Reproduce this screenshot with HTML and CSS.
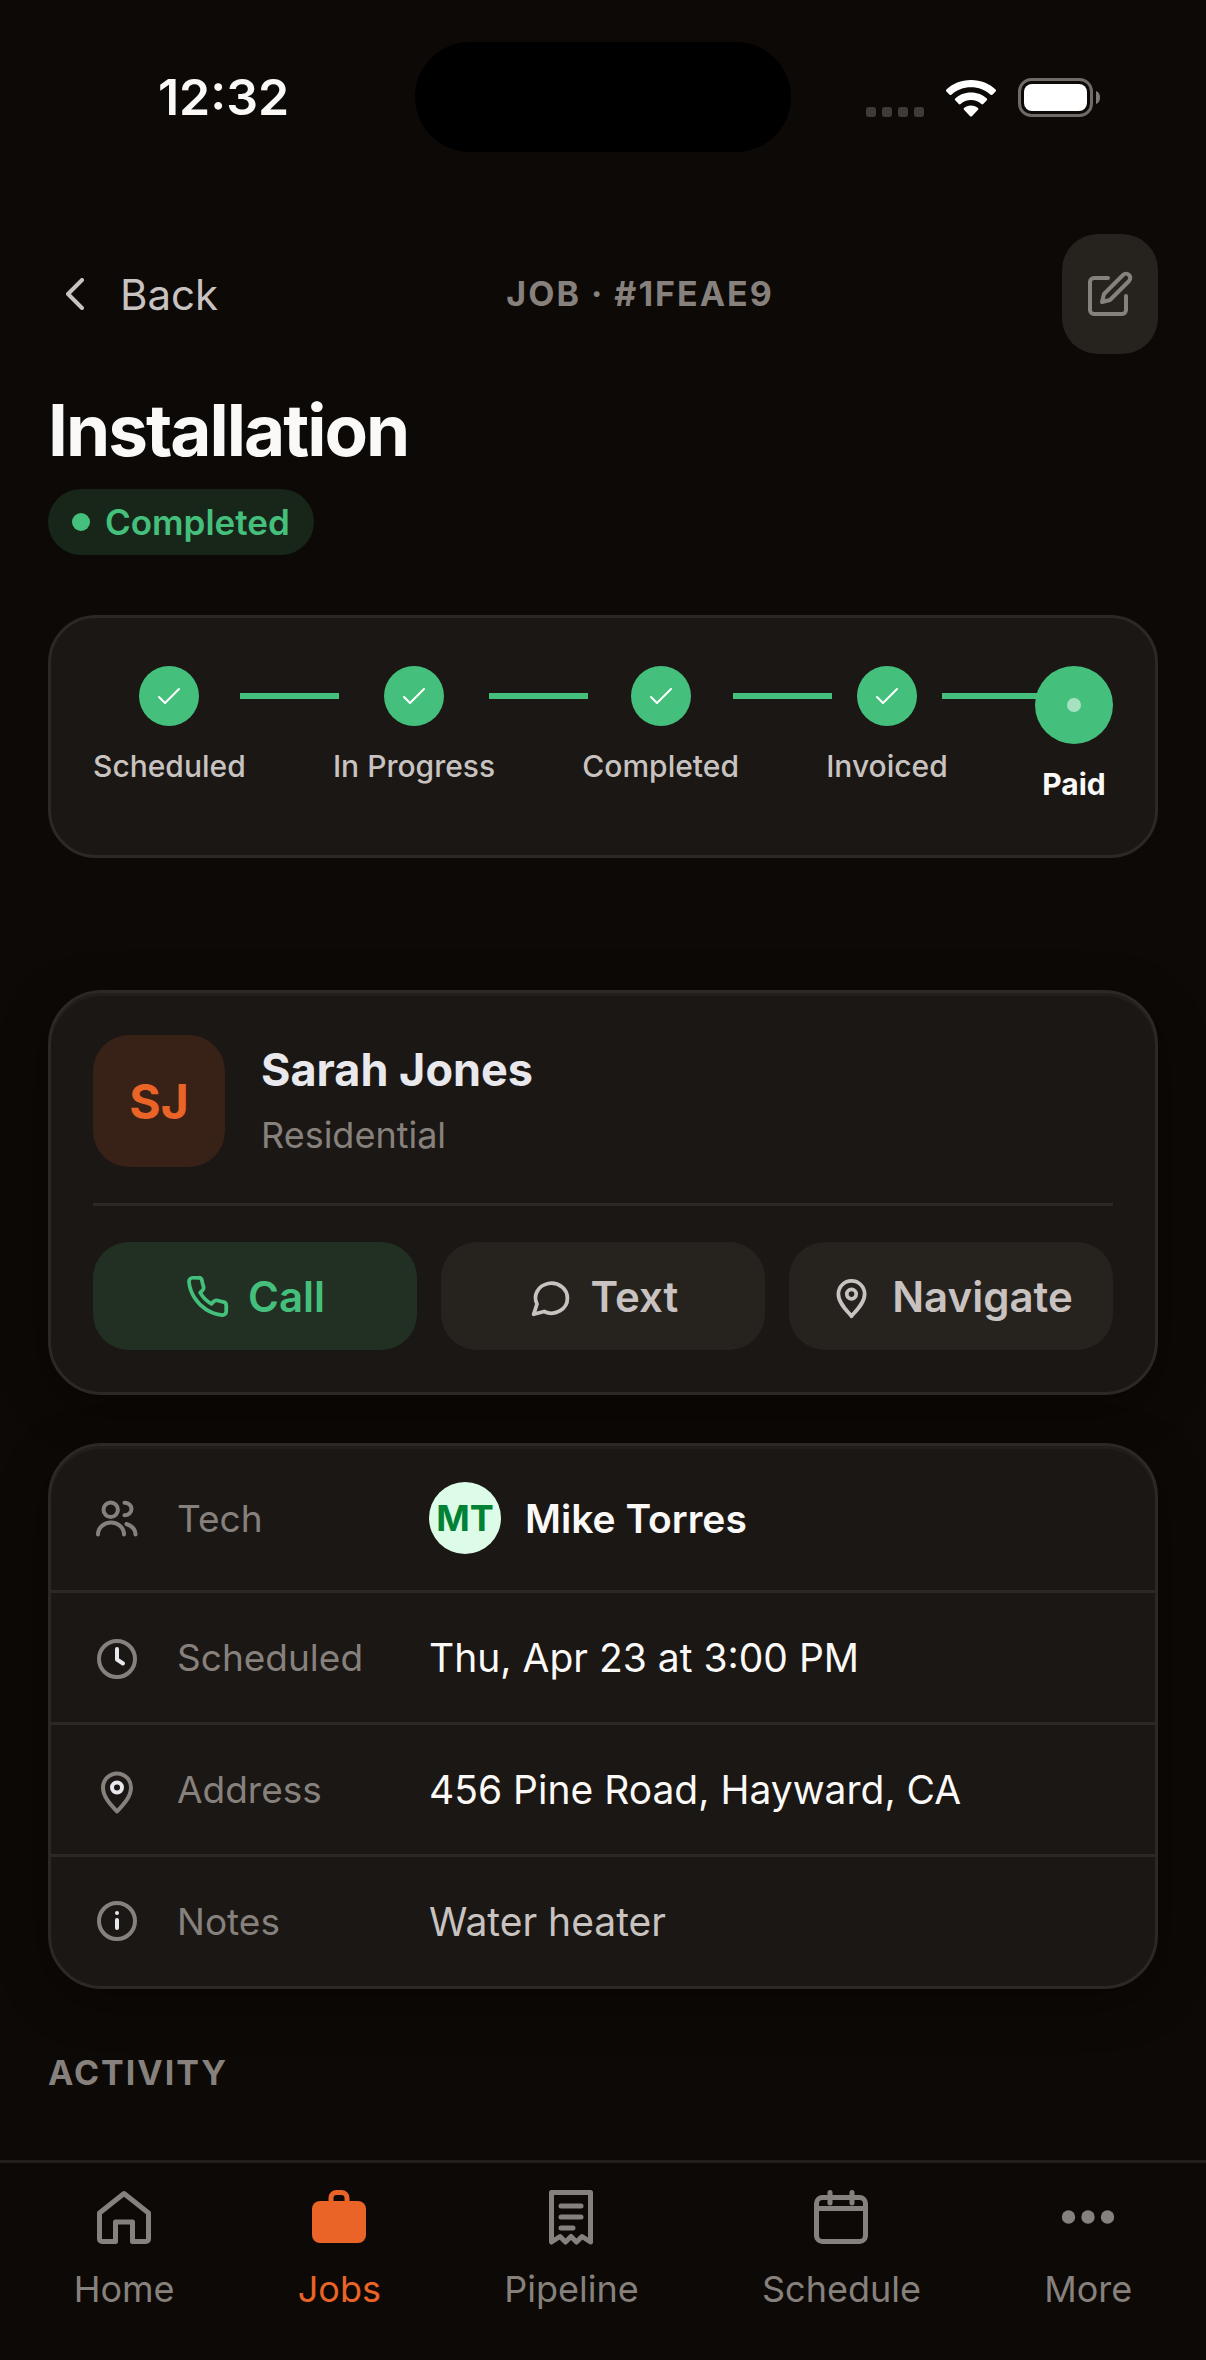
FILE: index.html
```html
<!DOCTYPE html>
<html lang="en">
<head>
    <meta charset="UTF-8">
    <meta name="viewport" content="width=device-width, initial-scale=1.0">
    <title>Job #1FEAE9</title>
    <link rel="stylesheet" href="styles.css">
</head>
<body>
    <div class="statusbar">
        <span class="time">12:32</span>
        <span class="island"></span>
        <div class="indicators">
            <svg class="signal" viewBox="0 0 58 10" width="58" height="10">
                <rect x="0" width="10" height="10" rx="3"/>
                <rect x="16" width="10" height="10" rx="3"/>
                <rect x="32" width="10" height="10" rx="3"/>
                <rect x="48" width="10" height="10" rx="3"/>
            </svg>
            <svg class="wifi" viewBox="0 0 50 37" width="50" height="37">
                <path d="M25 0C35 0 43.5 3.6 49.6 9.6Q50.4 10.5 49.6 11.4L46.4 14.7Q45.5 15.5 44.6 14.7C39.3 9.8 32.5 7.2 25 7.2S10.7 9.8 5.4 14.7Q4.5 15.5 3.6 14.7L.4 11.4Q-.4 10.5.4 9.6C6.5 3.6 15 0 25 0Z"/>
                <path d="M25 12.5C31.5 12.5 36.8 14.8 40.8 18.5Q41.7 19.4 40.8 20.3L37.2 24Q36.3 24.8 35.4 24C32.5 21.5 29 20 25 20S17.5 21.5 14.6 24Q13.7 24.8 12.8 24L9.2 20.3Q8.3 19.4 9.2 18.5C13.2 14.8 18.5 12.5 25 12.5Z"/>
                <path d="M25 25.5C28 25.5 30.2 26.5 32 28Q32.9 28.9 32 29.8L25.9 36.2Q25 37 24.1 36.2L18 29.8Q17.1 28.9 18 28C19.8 26.5 22 25.5 25 25.5Z"/>
            </svg>
            <svg class="battery" viewBox="0 0 82 39" width="82" height="39">
                <rect class="shell" x="1.5" y="1.5" width="72" height="36" rx="12"/>
                <rect class="charge" x="6" y="6" width="63" height="27" rx="8"/>
                <path class="nub" d="M78 13c3 1 4 3.5 4 6.5s-1 5.5-4 6.5z"/>
            </svg>
        </div>
    </div>

    <main>
        <header class="topbar">
            <button class="back" type="button">
                <svg viewBox="0 0 18 32" width="18" height="32"><path d="M16 2 2 16l14 14"/></svg>
                Back
            </button>
            <span class="job-id">JOB · #1FEAE9</span>
            <button class="edit" type="button" aria-label="Edit job">
                <svg viewBox="0 0 24 24" width="48" height="48">
                    <path d="M11 4H4a2 2 0 0 0-2 2v14a2 2 0 0 0 2 2h14a2 2 0 0 0 2-2v-7"/>
                    <path d="M18.5 2.5a2.121 2.121 0 0 1 3 3L12 15l-4 1 1-4 9.5-9.5z"/>
                </svg>
            </button>
        </header>

        <h1>Installation</h1>
        <span class="badge"><i></i>Completed</span>

        <section class="card steps">
            <div class="step">
                <span class="mark"><svg viewBox="0 0 24 18" width="24" height="18"><path d="M2 10l6 6L22 2"/></svg></span>
                Scheduled
            </div>
            <div class="line"></div>
            <div class="step">
                <span class="mark"><svg viewBox="0 0 24 18" width="24" height="18"><path d="M2 10l6 6L22 2"/></svg></span>
                In Progress
            </div>
            <div class="line"></div>
            <div class="step">
                <span class="mark"><svg viewBox="0 0 24 18" width="24" height="18"><path d="M2 10l6 6L22 2"/></svg></span>
                Completed
            </div>
            <div class="line"></div>
            <div class="step">
                <span class="mark"><svg viewBox="0 0 24 18" width="24" height="18"><path d="M2 10l6 6L22 2"/></svg></span>
                Invoiced
            </div>
            <div class="line"></div>
            <div class="step current">
                <span class="mark"><i></i></span>
                Paid
            </div>
        </section>

        <section class="card raised customer">
            <div class="person">
                <span class="initials">SJ</span>
                <div>
                    <h2>Sarah Jones</h2>
                    <p>Residential</p>
                </div>
            </div>
            <div class="actions">
                <button class="action call" type="button">
                    <svg viewBox="0 0 24 24" width="45" height="45"><path d="M22 16.92v3a2 2 0 0 1-2.18 2 19.79 19.79 0 0 1-8.63-3.07 19.5 19.5 0 0 1-6-6 19.79 19.79 0 0 1-3.07-8.67A2 2 0 0 1 4.11 2h3a2 2 0 0 1 2 1.72 12.84 12.84 0 0 0 .7 2.81 2 2 0 0 1-.45 2.11L8.09 9.91a16 16 0 0 0 6 6l1.27-1.27a2 2 0 0 1 2.11-.45 12.84 12.84 0 0 0 2.81.7A2 2 0 0 1 22 16.92z"/></svg>
                    Call
                </button>
                <button class="action" type="button">
                    <svg viewBox="0 0 24 24" width="45" height="45"><path d="M21 13a8.5 7.8 0 0 1-12.4 7L3 21.5l1.8-5.5A8.5 7.8 0 1 1 21 13z"/></svg>
                    Text
                </button>
                <button class="action" type="button">
                    <svg viewBox="0 0 24 24" width="45" height="45"><path d="M12 22.5c-2.5-3-7-7-7-11.8a7 7 0 0 1 14 0c0 4.8-4.5 8.8-7 11.8z"/><circle cx="12" cy="10.7" r="2.5"/></svg>
                    Navigate
                </button>
            </div>
        </section>

        <dl class="card raised details">
            <div class="row">
                <svg viewBox="0 0 48 48" width="48" height="48"><circle cx="17.7" cy="15.7" r="7.2"/><path d="M5 40.5a13 12 0 0 1 26 0"/><path d="M31.5 8.7a7 6.3 0 0 1 0 12.6"/><path d="M33.5 30q9 3 9 10.5"/></svg>
                <dt>Tech</dt>
                <dd class="tech"><span>MT</span>Mike Torres</dd>
            </div>
            <div class="row">
                <svg viewBox="0 0 48 48" width="48" height="48"><circle cx="24" cy="25" r="18"/><path class="lit" d="M24 15v10.5l6 4"/></svg>
                <dt>Scheduled</dt>
                <dd>Thu, Apr 23 at 3:00 PM</dd>
            </div>
            <div class="row">
                <svg viewBox="0 0 48 48" width="48" height="48"><path d="M24 45.5C19 40 10 31.5 10 21.5a14 14 0 0 1 28 0C38 31.5 29 40 24 45.5z"/><circle class="lit" cx="24" cy="21.5" r="5"/></svg>
                <dt>Address</dt>
                <dd>456 Pine Road, Hayward, CA</dd>
            </div>
            <div class="row">
                <svg viewBox="0 0 48 48" width="48" height="48"><circle cx="24" cy="23" r="18"/><path class="lit" d="M24 22v8M24 15v0"/></svg>
                <dt>Notes</dt>
                <dd class="soft">Water heater</dd>
            </div>
        </dl>

        <h3>ACTIVITY</h3>
    </main>

    <nav class="tabs">
        <a href="#home">
            <svg viewBox="0 0 60 60" width="60" height="60"><path d="M30 6.5 5.5 26v26a2.5 2.5 0 0 0 2.5 2.5h13.5V35h17v19.5H52a2.5 2.5 0 0 0 2.5-2.5V26z"/></svg>
            Home
        </a>
        <a class="active" href="#jobs">
            <svg viewBox="0 0 60 60" width="60" height="60"><rect class="solid" x="3" y="14" width="54" height="42" rx="8"/><path d="M22 16v-5a5.5 5.5 0 0 1 5.5-5.5h5A5.5 5.5 0 0 1 38 11v5"/></svg>
            Jobs
        </a>
        <a href="#pipeline">
            <svg viewBox="0 0 60 60" width="60" height="60"><path d="M10.5 5.5h39V55L41 49.5 35.5 55 30 49.5 24.5 55 19 49.5 10.5 55zM20 19h20M20 30h20M20 41h12"/></svg>
            Pipeline
        </a>
        <a href="#schedule">
            <svg viewBox="0 0 60 60" width="60" height="60"><rect x="5.5" y="10.5" width="49" height="44" rx="6"/><path d="M5.5 21.5h49M19 5.5V16M41 5.5V16"/></svg>
            Schedule
        </a>
        <a href="#more">
            <svg viewBox="0 0 60 60" width="60" height="60"><circle class="dot" cx="10.5" cy="30" r="6.7"/><circle class="dot" cx="30" cy="30" r="6.7"/><circle class="dot" cx="49.5" cy="30" r="6.7"/></svg>
            More
        </a>
    </nav>
</body>
</html>
```
FILE: styles.css
```css
:root {
    --bg: #0d0906;
    --card: #1b1714;
    --fill: #26221e;
    --border: #2c2826;
    --text: #faf9f7;
    --soft: #c8c3c0;
    --muted: #87817d;
    --green: #45c07c;
    --orange: #ea6427;
}
* {
    box-sizing: border-box;
}
body {
    margin: 0;
    min-height: 100vh;
    display: flex;
    flex-direction: column;
    background-color: var(--bg);
    color: var(--text);
    font-family: Inter, "Liberation Sans", sans-serif;
}
h1, h2, h3, p, dl, dd {
    margin: 0;
}
button {
    border: 0;
    padding: 0;
    background: none;
    font: inherit;
    color: inherit;
    cursor: pointer;
}
svg {
    flex: none;
    fill: none;
    stroke: currentColor;
    stroke-width: 4;
    stroke-linecap: round;
    stroke-linejoin: round;
}

/* status bar */
.statusbar {
    display: grid;
    grid-template-columns: 1fr 376px 1fr;
    align-items: center;
    padding-top: 42px;
    margin-bottom: 82px;
}
.time {
    padding-left: 32px;
    text-align: center;
    font-size: 50px;
    font-weight: 600;
}
.island {
    height: 110px;
    border-radius: 55px;
    background-color: #000;
}
.indicators {
    display: flex;
    justify-content: flex-end;
    align-items: flex-end;
    gap: 22px;
    padding-right: 106px;
}
.indicators svg {
    stroke: none;
    fill: #fff;
}
.indicators .signal {
    fill: #3f3a37;
}
.indicators .shell {
    fill: none;
    stroke: #6e6b69;
    stroke-width: 3;
}
.indicators .nub {
    fill: #7d7a78;
}

/* page */
main {
    flex: 1;
    padding: 0 48px;
}
.topbar {
    display: flex;
    justify-content: space-between;
    align-items: center;
}
.back {
    display: flex;
    align-items: center;
    gap: 36px;
    padding-left: 18px;
    font-size: 42px;
    color: var(--soft);
}
.job-id, h3 {
    font-size: 34px;
    line-height: 48px;
    font-weight: 700;
    letter-spacing: 2px;
    color: var(--muted);
}
.edit {
    display: flex;
    align-items: center;
    justify-content: center;
    width: 96px;
    height: 120px;
    border-radius: 36px;
    background-color: var(--fill);
    color: var(--muted);
}
.edit svg, .action svg {
    stroke-width: 2;
}
h1 {
    margin-top: 36px;
    font-size: 71px;
    line-height: 80px;
    font-weight: 700;
    letter-spacing: -2px;
}
.badge {
    display: inline-flex;
    align-items: center;
    gap: 15px;
    height: 66px;
    margin-top: 19px;
    padding: 0 24px;
    border-radius: 33px;
    background-color: #18261a;
    font-size: 35px;
    font-weight: 600;
    color: var(--green);
}
.badge i {
    width: 18px;
    height: 18px;
    border-radius: 50%;
    background-color: currentColor;
}
.card {
    border: 3px solid var(--border);
    border-radius: 48px;
    background-color: var(--card);
}
.raised {
    border-radius: 54px;
    box-shadow: 0 12px 48px rgba(0, 0, 0, 0.4), inset 0 3px 0 rgba(255, 255, 255, 0.03);
}

/* progress */
.steps {
    display: flex;
    align-items: flex-start;
    margin-top: 60px;
    padding: 48px 42px 53px;
}
.step {
    display: flex;
    flex-direction: column;
    align-items: center;
    gap: 22px;
    font-size: 30px;
    line-height: 36px;
    font-weight: 500;
    color: var(--soft);
}
.mark {
    display: flex;
    align-items: center;
    justify-content: center;
    width: 60px;
    height: 60px;
    border-radius: 50%;
    background-color: var(--green);
    color: #fff;
}
.mark svg {
    stroke-width: 2;
}
.line {
    flex: 1;
    height: 6px;
    margin: 27px -6px 0;
    background-color: var(--green);
}
.current {
    font-weight: 700;
    color: var(--text);
}
.current .mark {
    width: 78px;
    height: 78px;
}
.current .mark i {
    width: 14px;
    height: 14px;
    border-radius: 50%;
    background-color: #a6e2c0;
}

/* customer */
.customer {
    margin-top: 132px;
    padding: 42px;
}
.person {
    display: flex;
    align-items: center;
    gap: 36px;
    padding-bottom: 36px;
    border-bottom: 3px solid var(--border);
}
.initials {
    display: flex;
    align-items: center;
    justify-content: center;
    width: 132px;
    height: 132px;
    border-radius: 36px;
    background-color: #382117;
    font-size: 48px;
    font-weight: 700;
    color: var(--orange);
}
h2 {
    font-size: 45px;
    line-height: 60px;
    font-weight: 700;
    color: #e8e8ed;
}
.person p {
    margin-top: 8px;
    font-size: 36px;
    line-height: 54px;
    color: var(--muted);
}
.actions {
    display: grid;
    grid-template-columns: repeat(3, 1fr);
    gap: 24px;
    margin-top: 36px;
}
.action {
    display: flex;
    align-items: center;
    justify-content: center;
    gap: 18px;
    height: 108px;
    border-radius: 36px;
    background-color: var(--fill);
    font-size: 42px;
    font-weight: 600;
    color: var(--soft);
}
.call {
    background-color: #223024;
    color: var(--green);
}

/* details */
.details {
    margin-top: 48px;
}
.row {
    display: grid;
    grid-template-columns: 48px 216px 1fr;
    align-items: center;
    gap: 36px;
    padding: 36px 42px;
    border-bottom: 3px solid var(--border);
    font-size: 39px;
    line-height: 57px;
}
.row:last-child {
    border-bottom: 0;
}
.row svg {
    color: var(--muted);
}
.row .lit {
    stroke: #e8e8ed;
}
dt {
    font-size: 37px;
    color: var(--muted);
}
.tech {
    display: flex;
    align-items: center;
    gap: 24px;
    font-weight: 600;
}
.tech span {
    width: 72px;
    height: 72px;
    border-radius: 50%;
    background-color: #dcfce7;
    text-align: center;
    font-size: 36px;
    line-height: 72px;
    font-weight: 700;
    color: #008236;
}
.soft {
    color: var(--soft);
}
h3 {
    margin-top: 60px;
}

/* tab bar */
.tabs {
    display: flex;
    justify-content: space-around;
    height: 200px;
    padding: 24px 12px 0;
    border-top: 3px solid #231f1d;
}
.tabs a {
    display: flex;
    flex-direction: column;
    align-items: center;
    gap: 18px;
    font-size: 36px;
    line-height: 48px;
    color: var(--muted);
    text-decoration: none;
}
.tabs svg {
    stroke-width: 5;
}
.tabs .solid, .tabs .dot {
    fill: currentColor;
    stroke: none;
}
.tabs .active {
    color: var(--orange);
}
```
